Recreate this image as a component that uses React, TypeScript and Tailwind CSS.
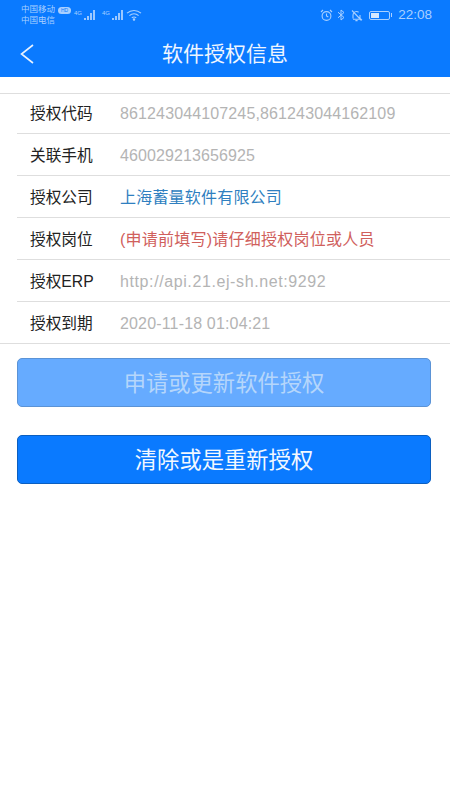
const font = '"Liberation Sans", "Noto Sans CJK SC", sans-serif';

const rows = [
  { label: '授权代码', value: '861243044107245,861243044162109', color: 'text-[#b4b4b4] tracking-[0.13px]' },
  { label: '关联手机', value: '460029213656925', color: 'text-[#b4b4b4] tracking-[0.1px]' },
  { label: '授权公司', value: '上海蓄量软件有限公司', color: 'text-[#2f7fc0] tracking-[0.2px]' },
  { label: '授权岗位', value: '(申请前填写)请仔细授权岗位或人员', color: 'text-[#d0605c] tracking-[0.24px]' },
  { label: '授权ERP', value: 'http://api.21.ej-sh.net:9292', color: 'text-[#b4b4b4] tracking-[0.6px]' },
  { label: '授权到期', value: '2020-11-18 01:04:21', color: 'text-[#b4b4b4] tracking-[0.16px]' },
];

function Signal() {
  return (
    <svg width="16" height="12" viewBox="0 0 16 12" fill="#9cc8ff">
      <rect x="2" y="9" width="2" height="2" />
      <rect x="5" y="7" width="2" height="4" />
      <rect x="8" y="4" width="2" height="7" />
      <rect x="11" y="1" width="2" height="10" />
    </svg>
  );
}

function StatusBar() {
  return (
    <div className="flex h-[30px] items-center justify-between pl-[21px] pr-[18px] text-[#a9d0ff]">
      <div className="flex items-center">
        <div className="w-[37px] text-[8.5px] leading-[11px] whitespace-nowrap">
          <div>中国移动</div>
          <div>中国电信</div>
        </div>
        <span className="mb-[10px] h-[7px] w-[13px] rounded-full bg-[#a9d0ff] text-center text-[5px] leading-[7px] text-[#0a7aff]">HD</span>
        <span className="ml-[3px] mb-[5px] w-[8px] text-[6px] leading-none">4G</span>
        <Signal />
        <span className="ml-[4px] mb-[5px] w-[8px] text-[6px] leading-none">4G</span>
        <Signal />
        <svg className="ml-[0px]" width="16" height="12" viewBox="0 0 16 12" fill="none" stroke="#a9d0ff" strokeWidth="1.1">
          <path d="M1 4.2C5 .6 11 .6 15 4.2" />
          <path d="M3.4 6.6c2.7-2.3 6.5-2.3 9.2 0" />
          <path d="M5.8 8.8c1.3-1 3.1-1 4.4 0" />
          <circle cx="8" cy="10.6" r=".7" fill="#a9d0ff" />
        </svg>
      </div>
      <div className="flex items-center">
        <svg width="13" height="13" viewBox="0 0 13 13" fill="none" stroke="#a9d0ff" strokeWidth="1.1">
          <circle cx="6.5" cy="7" r="4.4" />
          <path d="M6.5 4.6V7l1.8 1M1 3l2-2M12 3l-2-2" />
        </svg>
        <svg className="ml-[4px]" width="8" height="12" viewBox="0 0 8 12" fill="none" stroke="#a9d0ff" strokeWidth="1">
          <path d="M1 3.2l6 5.3L4 11V1l3 2.5L1 8.8" />
        </svg>
        <svg className="ml-[5px]" width="13" height="13" viewBox="0 0 13 13" fill="none" stroke="#a9d0ff" strokeWidth="1.1">
          <path d="M3 9.5V6a3.5 3.5 0 0 1 5.6-2.8M10 6v3.5l1 .8H3M5.4 11.6h2.2M2 1.5l9.5 10" />
        </svg>
        <div className="ml-[6px] flex h-[9px] w-[21px] rounded-[2px] border border-[#a9d0ff] p-[1px]">
          <div className="w-[8px] bg-[#d5e8ff]" />
        </div>
        <div className="ml-[1px] h-[4px] w-[1px] bg-[#a9d0ff]" />
        <span className="ml-[6px] text-[13.5px] leading-none">22:08</span>
      </div>
    </div>
  );
}

function InfoRow({ label, value, color }: { label: string; value: string; color: string }) {
  return (
    <div className="ml-[17px] flex h-[42px] items-center border-b border-[#dedede] pl-[13px] pt-[2px] first:h-[40px] first:pt-0 last:ml-0 last:pl-[30px]">
      <div className="w-[90px] text-[15.7px] text-[#222222] whitespace-nowrap">{label}</div>
      <div className={`text-[16px] whitespace-nowrap ${color}`}>{value}</div>
    </div>
  );
}

export default function App() {
  return (
    <div className="h-[800px] w-[450px] overflow-hidden bg-white" style={{ fontFamily: font }}>
      <div className="h-[77px] bg-[#0a7aff]">
        <StatusBar />
        <div className="relative flex h-[47px] items-center justify-center">
          <svg className="absolute left-[20px] top-[14px]" width="14" height="20" viewBox="0 0 14 20" fill="none" stroke="#e8f2ff" strokeWidth="1.6">
            <path d="M13 1L1.5 10 13 19" />
          </svg>
          <span className="text-[21px] text-[#eef5ff]">软件授权信息</span>
        </div>
      </div>
      <div className="mt-[16px] border-t border-[#dedede]">
        {rows.map(r => (
          <InfoRow key={r.label} label={r.label} value={r.value} color={r.color} />
        ))}
      </div>
      <div className="mt-[14px] flex flex-col gap-[28px] pl-[17px] pr-[19px]">
        <button className="h-[49px] rounded-[5px] border border-[#5b93d6] bg-[#66abff] pt-[3px] text-[22.3px] text-[#b5d6fb]">
          申请或更新软件授权
        </button>
        <button className="h-[49px] rounded-[5px] border border-[#0b5fc0] bg-[#0a7aff] pt-[2px] text-[22.3px] text-[#f2f8ff]">
          清除或是重新授权
        </button>
      </div>
    </div>
  );
}
